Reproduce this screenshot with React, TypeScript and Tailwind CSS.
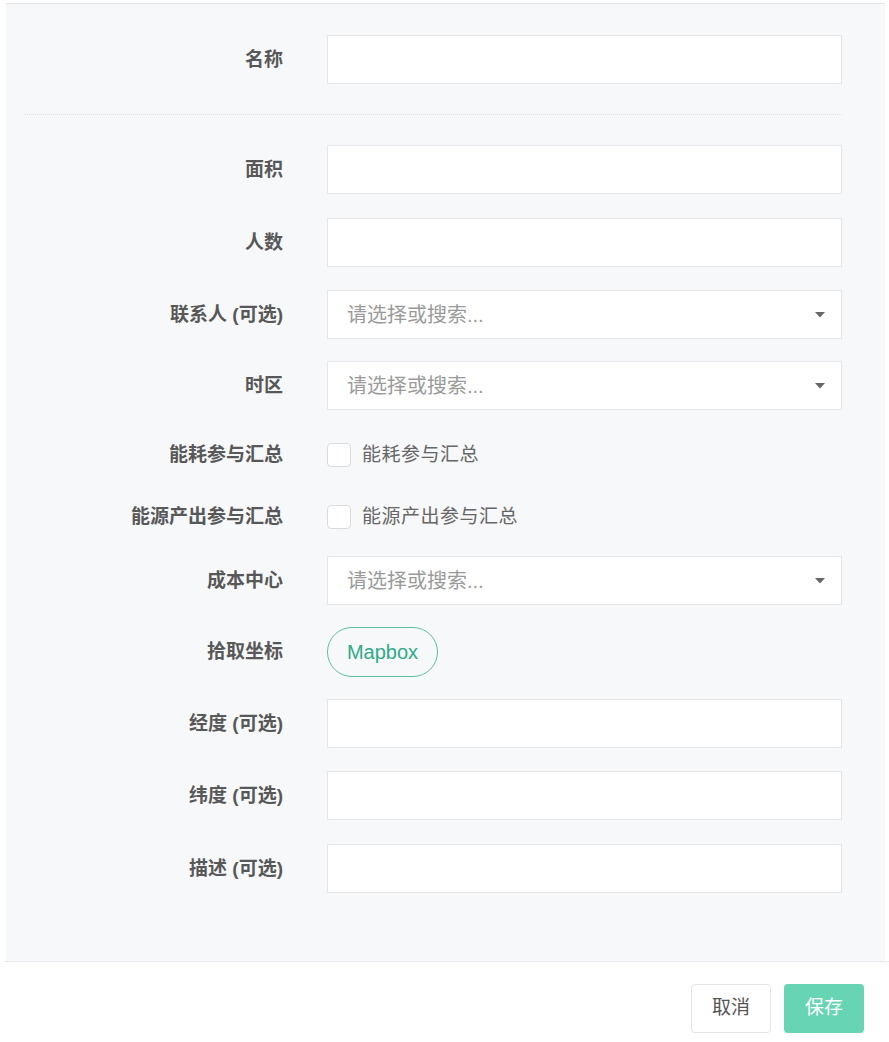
import React from "react";

const font = { fontFamily: '"Liberation Sans", "Noto Sans CJK SC", sans-serif' };

function Label({ children }: { children: React.ReactNode }) {
  return (
    <div className="w-[277px] shrink-0 text-right text-[19px] font-bold leading-[24px] text-[#585858]">
      {children}
    </div>
  );
}

function InputRow({ label, mt }: { label: string; mt: string }) {
  return (
    <div className={`flex items-center ${mt}`}>
      <Label>{label}</Label>
      <div className="ml-[44px] h-[49px] w-[515px] border border-[#e4e6e9] bg-white" />
    </div>
  );
}

function SelectRow({ label, mt }: { label: string; mt: string }) {
  return (
    <div className={`flex items-center ${mt}`}>
      <Label>{label}</Label>
      <div className="ml-[44px] flex h-[49px] w-[515px] items-center justify-between border border-[#e4e6e9] bg-white pl-[19px] pr-[16px]">
        <span className="text-[20px] text-[#9a9a9a]">请选择或搜索...</span>
        <svg width="10" height="6" viewBox="0 0 10 6">
          <path d="M0 0 L10 0 L5 5.5 Z" fill="#666" />
        </svg>
      </div>
    </div>
  );
}

function CheckRow({ label, h, mt }: { label: string; h: string; mt: string }) {
  return (
    <div className={`flex items-center ${h} ${mt}`}>
      <Label>{label}</Label>
      <div className="ml-[44px] flex items-center">
        <div className="h-[24px] w-[24px] rounded-[4px] border border-[#d9dbde] bg-white" />
        <span className="ml-[11px] text-[19px] tracking-[0.5px] text-[#666]">{label}</span>
      </div>
    </div>
  );
}

export default function App() {
  return (
    <div className="relative h-[1042px] w-[889px] overflow-hidden bg-white" style={font}>
      <div className="pt-[3px]">
        <div className="mx-[6px] h-[958px] w-[879px] border-t border-[#e3e5e8] bg-[#f7f8fa]">
          <div className="pt-[31px]">
            <InputRow label="名称" mt="" />
            <div className="ml-[19px] mt-[30px] w-[817px] border-t border-dotted border-[#dcdfe3]" />
            <InputRow label="面积" mt="mt-[30px]" />
            <InputRow label="人数" mt="mt-[24px]" />
            <SelectRow label="联系人 (可选)" mt="mt-[23px]" />
            <SelectRow label="时区" mt="mt-[22px]" />
            <CheckRow label="能耗参与汇总" h="h-[44px]" mt="mt-[23px]" />
            <CheckRow label="能源产出参与汇总" h="h-[34px]" mt="mt-[23px]" />
            <SelectRow label="成本中心" mt="mt-[22px]" />
            <div className="mt-[22px] flex items-center">
              <Label>拾取坐标</Label>
              <div className="ml-[44px] flex h-[50px] w-[111px] items-center justify-center rounded-full border border-[#5cbf9f] text-[20px] text-[#2faa88]">
                Mapbox
              </div>
            </div>
            <InputRow label="经度 (可选)" mt="mt-[22px]" />
            <InputRow label="纬度 (可选)" mt="mt-[23px]" />
            <InputRow label="描述 (可选)" mt="mt-[24px]" />
          </div>
        </div>
        <div className="ml-[4px] border-t border-[#e6e8eb]" />
      </div>
      <div className="flex justify-end gap-[13px] pr-[25px] pt-[22px]">
        <div className="flex h-[49px] w-[80px] items-center justify-center rounded-[4px] border border-[#e3e5e8] bg-white text-[19px] text-[#555]">
          取消
        </div>
        <div className="flex h-[49px] w-[80px] items-center justify-center rounded-[4px] bg-[#67d4b4] text-[19px] text-white">
          保存
        </div>
      </div>
    </div>
  );
}
